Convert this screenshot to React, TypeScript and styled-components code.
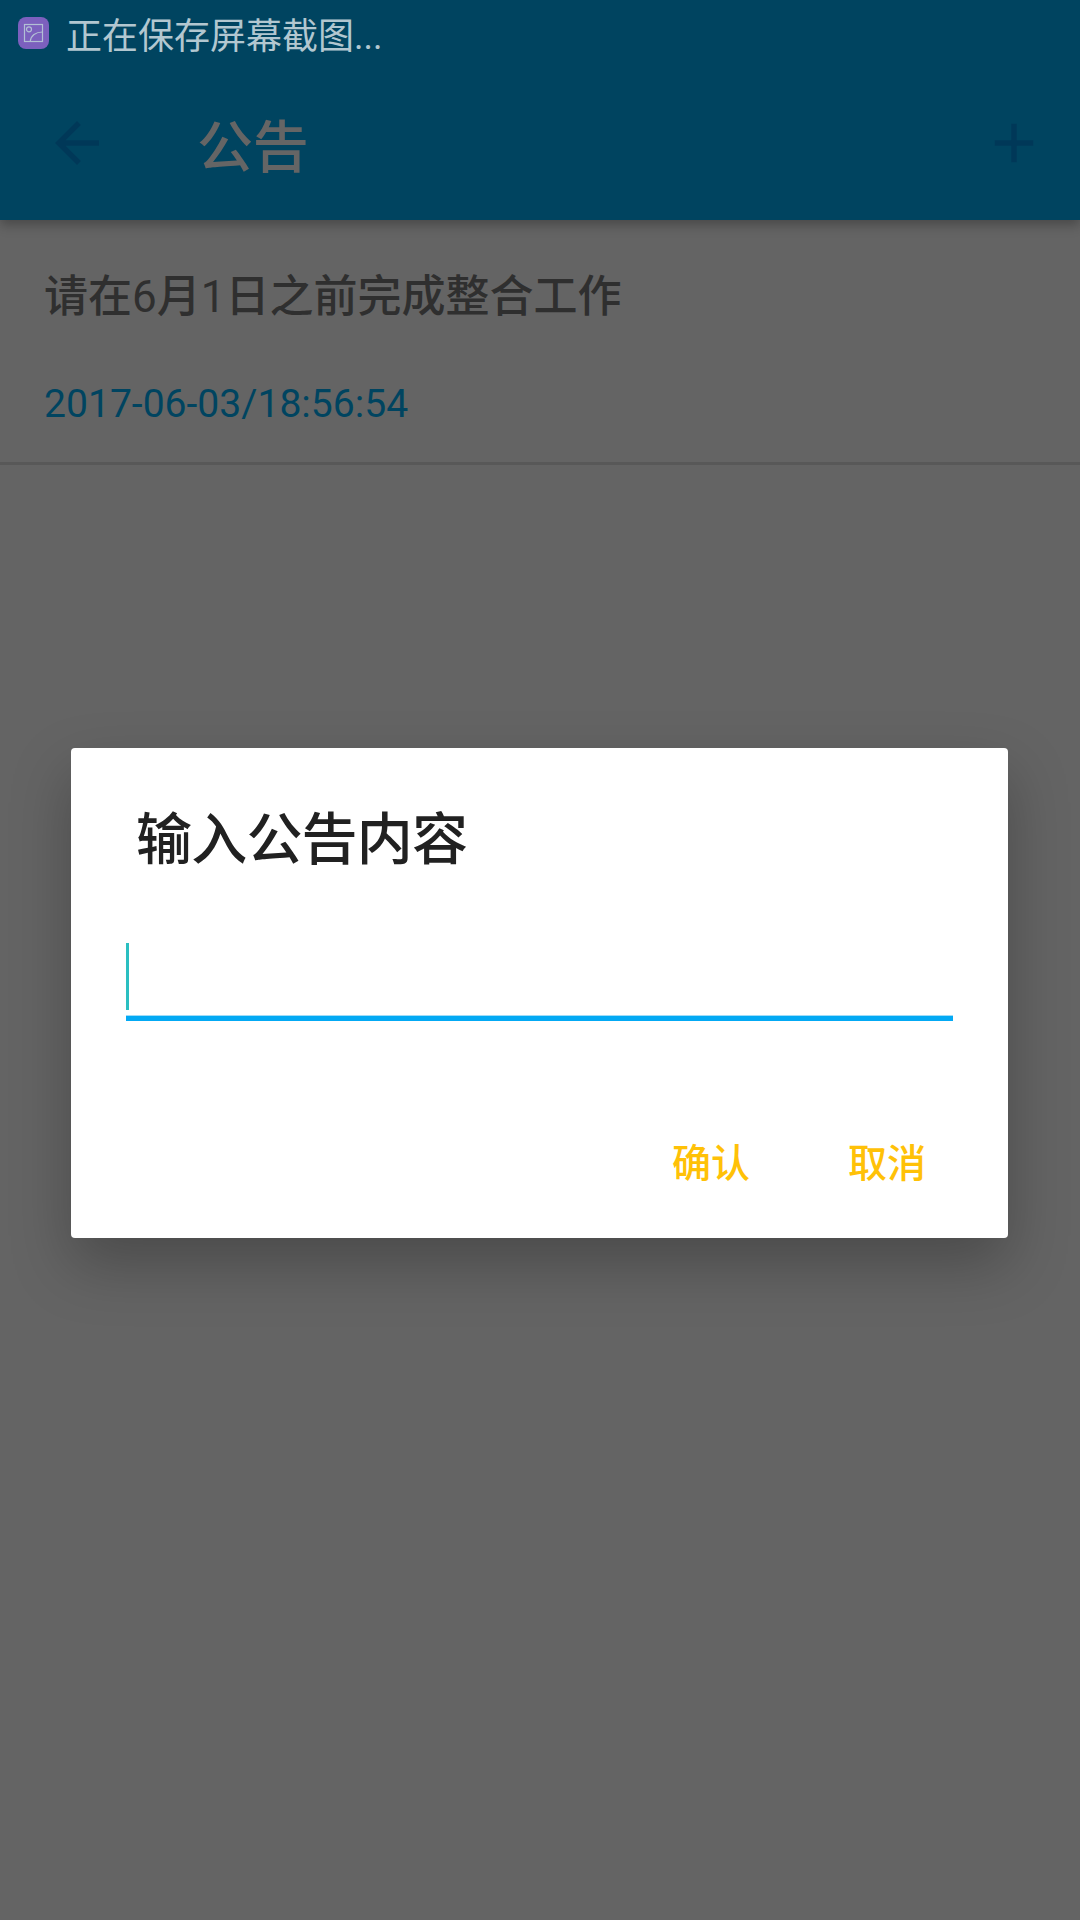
import React from 'react';
import styled, { createGlobalStyle } from 'styled-components';

const GlobalStyle = createGlobalStyle`
  * { box-sizing: border-box; }
  body {
    margin: 0;
    background: #646464;
    font-family: Roboto, "Noto Sans CJK SC", sans-serif;
  }
`;

const Screen = styled.div`
  width: 1080px;
  height: 1920px;
  overflow: hidden;
  background: #646464;
  display: flex;
  flex-direction: column;
`;

const Header = styled.header`
  height: 220px;
  flex: none;
  background: #004460;
  box-shadow: 0 5px 11px rgba(0, 0, 0, 0.28);
  display: flex;
  flex-direction: column;
`;

const StatusBar = styled.div`
  height: 66px;
  padding: 0 0 0 18px;
  display: flex;
  align-items: center;
  gap: 16px;
`;

const StatusText = styled.span`
  font-size: 36px;
  line-height: 40px;
  color: #b2c7d0;
  padding-top: 8px;
`;

const Toolbar = styled.div`
  height: 154px;
  padding: 0 33px 0 44px;
  display: flex;
  align-items: center;
`;

const IconButton = styled.button`
  border: 0;
  padding: 0;
  background: none;
  width: 66px;
  height: 66px;
  margin-top: -1px;
  color: #003858;
  display: flex;
`;

const ToolbarTitle = styled.h1`
  flex: 1;
  margin: 9px 0 0 87px;
  font-size: 56px;
  font-weight: 500;
  line-height: 66px;
  letter-spacing: -0.2px;
  color: #656565;
`;

const Notice = styled.article`
  height: 245px;
  padding: 45px 44px 0;
  border-bottom: 3px solid #585858;
  display: flex;
  flex-direction: column;
  gap: 43px;
`;

const NoticeText = styled.p`
  margin: 0;
  font-size: 44px;
  font-weight: 500;
  line-height: 64px;
  color: #2f2f2f;
`;

const Digit = styled.span`
  font-weight: 400;
`;

const NoticeDate = styled.time`
  font-size: 39.1px;
  line-height: 64px;
  color: #004460;
`;

const Overlay = styled.div`
  position: absolute;
  top: 0;
  left: 0;
  width: 1080px;
  height: 1920px;
  overflow: hidden;
  padding: 748px 72px 0 71px;
`;

const Dialog = styled.section`
  height: 490px;
  background: #fff;
  border-radius: 4px;
  box-shadow: 0 26px 60px rgba(0, 0, 0, 0.26);
  padding: 58px 55px 0;
  display: flex;
  flex-direction: column;
`;

const DialogTitle = styled.h2`
  margin: 0 0 0 10px;
  font-size: 56px;
  font-weight: 500;
  line-height: 68px;
  letter-spacing: -0.8px;
  color: #212121;
`;

const Field = styled.div`
  width: 827px;
  height: 78px;
  margin-top: 69px;
  border-bottom: 5px solid #03a9f4;
  box-shadow: inset 0 -1px 0 #9fdcf8;
`;

const Caret = styled.div`
  width: 3px;
  height: 67px;
  background: #2abfc1;
`;

const Actions = styled.div`
  display: flex;
  justify-content: flex-end;
  gap: 98px;
  margin-top: 115px;
  padding-right: 27px;
`;

const ActionButton = styled.button`
  border: 0;
  padding: 0;
  background: none;
  font-family: inherit;
  font-size: 39px;
  font-weight: 500;
  line-height: 56px;
  color: #ffc107;
`;

const PictureBadge = () => (
  <svg width="32" height="32" viewBox="0 0 32 32" fill="none">
    <rect width="31" height="32" rx="8" fill="#7c60be" />
    <g stroke="#b2bfd5" strokeWidth="1.2">
      <rect x="6.5" y="7.5" width="18" height="17" />
      <circle cx="11" cy="12.3" r="2.5" />
      <path d="M12.2 24.5C12.8 18.7 17.6 15 24.5 15" />
    </g>
  </svg>
);

const BackIcon = () => (
  <svg width="66" height="66" viewBox="0 0 24 24" fill="currentColor">
    <path d="M20 11H7.83l5.59-5.59L12 4l-8 8 8 8 1.41-1.41L7.83 13H20v-2z" />
  </svg>
);

const AddIcon = () => (
  <svg width="66" height="66" viewBox="0 0 24 24" fill="currentColor">
    <path d="M19 13h-6v6h-2v-6H5v-2h6V5h2v6h6v2z" />
  </svg>
);

export default function App() {
  return (
    <>
      <GlobalStyle />
      <Screen>
        <Header>
          <StatusBar>
            <PictureBadge />
            <StatusText>正在保存屏幕截图...</StatusText>
          </StatusBar>
          <Toolbar>
            <IconButton aria-label="返回"><BackIcon /></IconButton>
            <ToolbarTitle>公告</ToolbarTitle>
            <IconButton aria-label="添加"><AddIcon /></IconButton>
          </Toolbar>
        </Header>
        <Notice>
          <NoticeText>
            请在<Digit>6</Digit>月<Digit>1</Digit>日之前完成整合工作
          </NoticeText>
          <NoticeDate>2017-06-03/18:56:54</NoticeDate>
        </Notice>
      </Screen>
      <Overlay>
        <Dialog role="dialog">
          <DialogTitle>输入公告内容</DialogTitle>
          <Field><Caret /></Field>
          <Actions>
            <ActionButton>确认</ActionButton>
            <ActionButton>取消</ActionButton>
          </Actions>
        </Dialog>
      </Overlay>
    </>
  );
}
